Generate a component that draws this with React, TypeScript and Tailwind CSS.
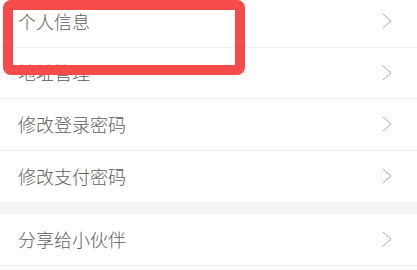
import React from 'react';

function Chevron() {
  return (
    <svg width="10" height="16" viewBox="0 0 10 16" fill="none">
      <polyline points="1,1 9,8 1,15" stroke="#a8a8a8" strokeWidth="1" />
    </svg>
  );
}

function Row({ label, last }: { label: string; last?: boolean }) {
  return (
    <div
      className={`flex h-[51.5px] items-center justify-between pl-[18px] pr-[25px] ${
        last ? '' : 'border-b border-[#f0f0f0]'
      }`}
    >
      <span className="text-[18px] font-light text-[#5e5e5e]">{label}</span>
      <Chevron />
    </div>
  );
}

export default function App(): React.ReactElement {
  return (
    <main
      className="relative h-[270px] w-[417px] overflow-hidden bg-white"
      style={{ fontFamily: '"Noto Sans CJK SC", "Noto Sans", sans-serif' }}
    >
      <div className="-mt-[4px]">
        <Row label="个人信息" />
        <Row label="地址管理" />
        <Row label="修改登录密码" />
        <Row label="修改支付密码" last />
        <div className="h-[12px] bg-[#f4f4f4]" />
        <Row label="分享给小伙伴" />
      </div>

      {/* highlight box */}
      <div className="absolute left-[3px] top-0 h-[75px] w-[242px] rounded-[8px] border-[10px] border-[#f74a4a]" />
    </main>
  );
}
